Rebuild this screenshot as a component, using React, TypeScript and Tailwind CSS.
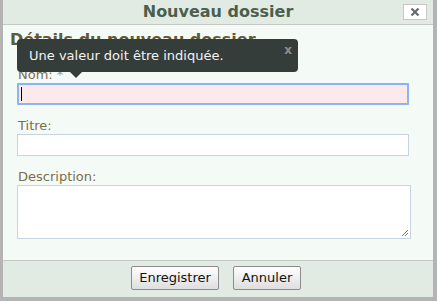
import React from "react";

export default function App() {
  const font = { fontFamily: '"DejaVu Sans", Verdana, sans-serif' };
  return (
    <div
      className="w-[437px] h-[301px] bg-[#b4b4b4] pl-[3px] pr-[4px] pb-[4px] flex flex-col overflow-hidden"
      style={font}
    >
      <div className="h-[25px] bg-[#e2ebe3] border-b border-[#c3c8c3] relative flex items-center justify-center shrink-0">
        <span className="text-[16px] font-bold text-[#4b5f4c] leading-none">Nouveau dossier</span>
        <div className="absolute left-[400px] top-[4px] w-[24px] h-[16px] bg-white border border-[#c8c8c8] flex items-center justify-center">
          <svg width="10" height="10" viewBox="0 0 10 10">
            <path d="M1.5 1.5 L8.5 8.5 M8.5 1.5 L1.5 8.5" stroke="#6a6a6a" strokeWidth="2.2" />
          </svg>
        </div>
      </div>

      <div className="flex-1 bg-[#f4fbf6] relative">
        <div className="pl-[7px] pt-[5px] text-[16px] font-bold text-[#5e5a3c] leading-[20px]">
          Détails du nouveau dossier
        </div>
        <div className="px-[14px] mt-[17px]">
          <div className="text-[13px] leading-[16px] text-[#7d6c4c] pl-[1px]">
            Nom: <span className="text-[#a0a0a0]">*</span>
          </div>
          <div className="h-[22px] w-[392px] bg-[#fbe9ec] border-2 border-[#8ab4f2] rounded-[1px] flex items-center pl-[2px]">
            <div className="w-[1px] h-[14px] bg-black" />
          </div>
          <div className="text-[13px] leading-[16px] text-[#7d6c4c] pl-[1px] mt-[13px]">Titre:</div>
          <div className="h-[22px] w-[392px] bg-white border border-[#c6d3e3]" />
          <div className="text-[13px] leading-[16px] text-[#7d6c4c] pl-[1px] mt-[13px]">Description:</div>
          <div className="relative h-[54px] w-[394px] bg-white border border-[#c6d3e3]">
            <svg className="absolute right-[1px] bottom-[1px]" width="8" height="8" viewBox="0 0 8 8">
              <path d="M7 1 L1 7 M7 4 L4 7" stroke="#777" strokeWidth="1" />
            </svg>
          </div>
        </div>

        <div className="absolute left-[14px] top-[14px] w-[281px] h-[33px] bg-[#353d3b] rounded-[4px] flex items-center pl-[12px]">
          <span className="text-[13px] text-[#f2f2f2] leading-none">Une valeur doit être indiquée.</span>
          <span className="absolute right-[6px] top-[5px] text-[12px] font-bold text-[#8c8c8c] leading-none">x</span>
          <div className="absolute left-[53px] top-[33px] w-0 h-0 border-l-[6px] border-r-[6px] border-t-[6px] border-l-transparent border-r-transparent border-t-[#353d3b]" />
        </div>
      </div>

      <div className="h-[37px] bg-[#e2ebe3] border-t border-[#c3c8c3] flex justify-center gap-[14px] pt-[5px] pr-[4px] shrink-0">
        <button className="h-[24px] w-[88px] border border-[#8c8c8c] rounded-[2px] bg-gradient-to-b from-white to-[#dedede] text-[13px] text-[#111]">
          Enregistrer
        </button>
        <button className="h-[24px] w-[68px] border border-[#8c8c8c] rounded-[2px] bg-gradient-to-b from-white to-[#dedede] text-[13px] text-[#111]">
          Annuler
        </button>
      </div>
    </div>
  );
}
